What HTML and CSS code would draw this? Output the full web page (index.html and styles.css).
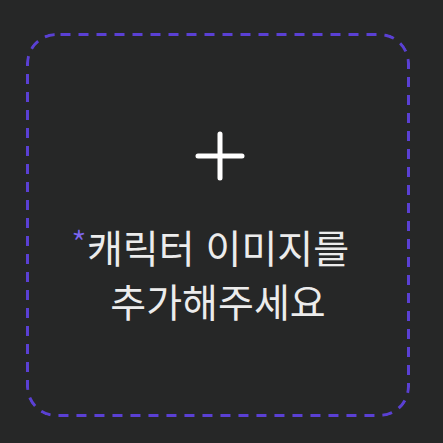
FILE: index.html
```html
<!DOCTYPE html>
<html lang="ko">
<head>
<meta charset="utf-8">
<link rel="stylesheet" href="styles.css">
</head>
<body>
  <div class="uploader">
    <svg class="plus" width="50" height="50" viewBox="0 0 50 50" aria-hidden="true">
      <path d="M25 3 V47 M3 25 H47" stroke="#ffffff" stroke-width="5" stroke-linecap="round" fill="none"/>
    </svg>
    <p class="label"><span class="first"><span class="req">*</span>캐릭터 이미지를</span><br>추가해주세요</p>
  </div>
</body>
</html>
```

FILE: styles.css
```css
html, body {
  margin: 0;
  padding: 0;
  background: #262727;
}
body {
  width: 443px;
  height: 443px;
  overflow: hidden;
  font-family: "Noto Sans CJK KR", "Noto Sans", sans-serif;
}
.uploader {
  box-sizing: border-box;
  width: 384px;
  height: 384px;
  margin: 33px 0 0 26px;
  border-radius: 30px;
  background-image: url("data:image/svg+xml,%3Csvg xmlns='http://www.w3.org/2000/svg' width='384' height='384'%3E%3Crect x='1.5' y='1.5' width='381' height='381' rx='29' ry='29' fill='none' stroke='%235a40d4' stroke-width='3' stroke-dasharray='10 8' stroke-dashoffset='-4'/%3E%3C/svg%3E");
  background-repeat: no-repeat;
  display: flex;
  flex-direction: column;
  align-items: center;
  padding-top: 98px;
}
.plus {
  display: block;
  margin-left: 4px;
}
.label {
  margin: 38px 0 0 0;
  color: #ececec;
  font-size: 39px;
  line-height: 54px;
  text-align: center;
  font-weight: 400;
}
.first {
  position: relative;
}
.req {
  position: absolute;
  right: 100%;
  top: 6px;
  margin-right: 0;
  color: #7d66f0;
  font-size: 36px;
  font-weight: 300;
  line-height: 1;
}
```
